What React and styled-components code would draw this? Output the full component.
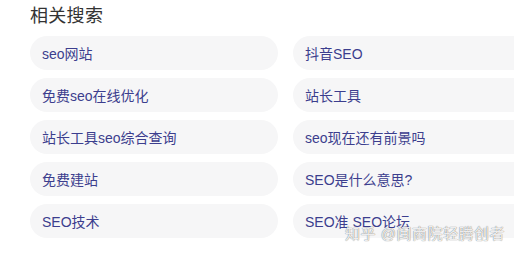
import { Fragment } from 'react'
import styled, { createGlobalStyle } from 'styled-components'

const Global = createGlobalStyle`
  html, body {
    margin: 0;
    padding: 0;
    background: #ffffff;
    overflow: hidden;
  }
  body {
    font-family: "Liberation Sans", "Noto Sans CJK SC", sans-serif;
  }
`

const left = ['seo网站', '免费seo在线优化', '站长工具seo综合查询', '免费建站', 'SEO技术']
const right = ['抖音SEO', '站长工具', 'seo现在还有前景吗', 'SEO是什么意思?', 'SEO准 SEO论坛']

export default function App () {
    const rows = left.map((l, i) => [l, right[i]])

    return (
        <Page>
            <Global />
            <Title>相关搜索</Title>
            <Grid>
                {rows.map(([a, b], i) => (
                    <Fragment key={i}>
                        <Pill>{a}</Pill>
                        <Pill>{b}</Pill>
                    </Fragment>
                ))}
            </Grid>
            <Watermark>知乎 @闽商院轻腾创者</Watermark>
        </Page>
    )
}

const Page = styled.div`
    position: relative;
    width: 514px;
    height: 256px;
    padding: 4px 0 0 30px;
    box-sizing: border-box;
    overflow: hidden;
`

const Title = styled.h2`
    margin: 0;
    font-size: 18px;
    line-height: 24px;
    font-weight: 400;
    color: #333333;
    letter-spacing: 0.3px;
`

const Grid = styled.div`
    display: grid;
    grid-template-columns: 248px 248px;
    column-gap: 15px;
    row-gap: 8px;
    margin-top: 8px;
`

const Pill = styled.div`
    height: 34px;
    display: flex;
    align-items: center;
    padding-left: 12px;
    border-radius: 17px;
    background: #f6f6f7;
    color: #3c3e8e;
    font-size: 14px;
    white-space: nowrap;
`

const Watermark = styled.div`
    position: absolute;
    left: 345px;
    top: 223px;
    font-size: 15px;
    line-height: 21px;
    color: rgba(255, 255, 255, 0.9);
    text-shadow: 0 0 1px rgba(0, 0, 0, 0.45), 0 0 1px rgba(0, 0, 0, 0.3);
    letter-spacing: 0.5px;
    white-space: nowrap;
`
